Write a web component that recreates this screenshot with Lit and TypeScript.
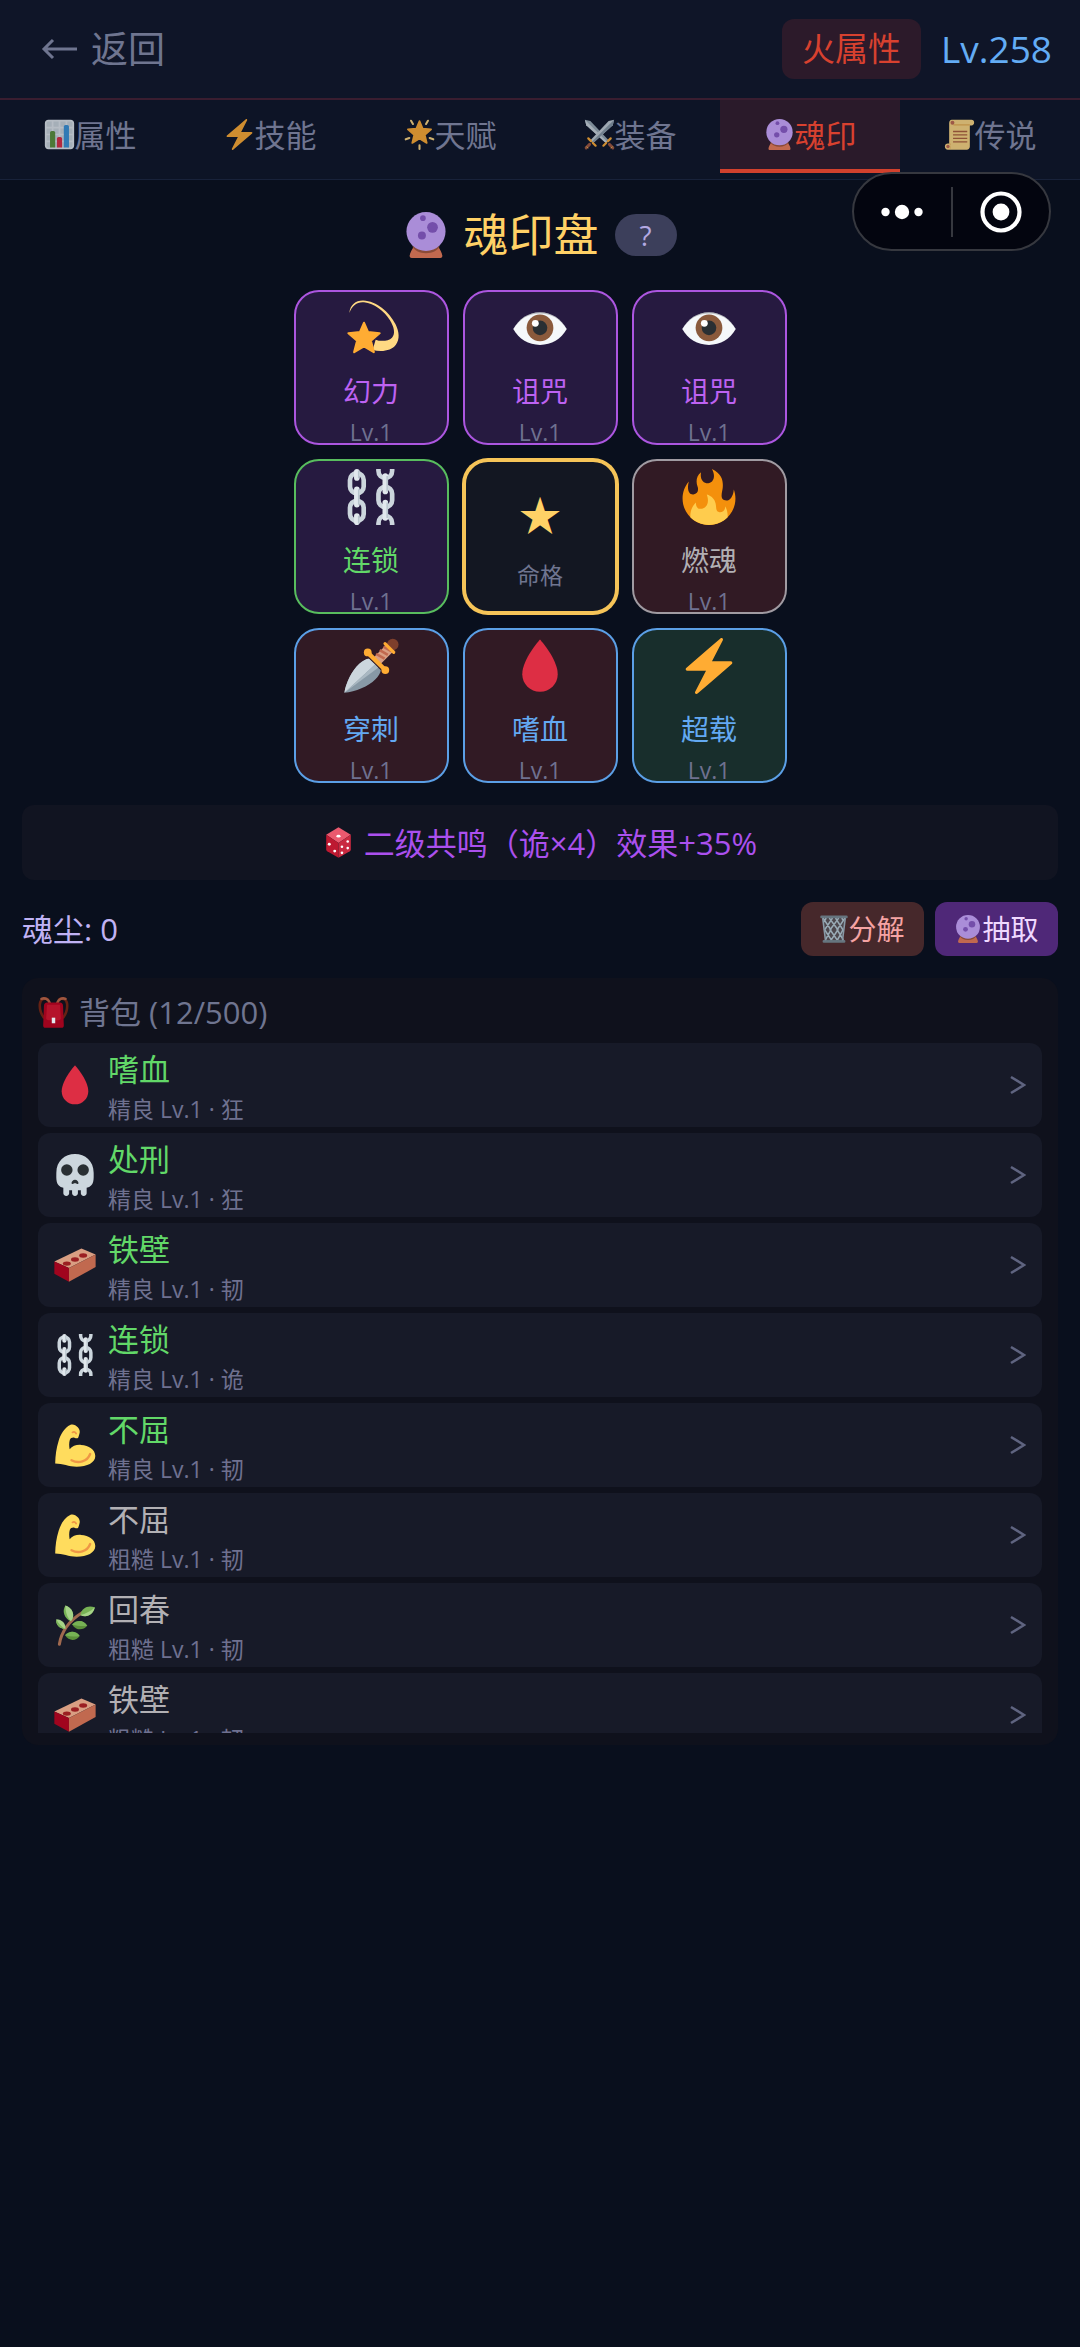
import { LitElement, html, svg, css, TemplateResult, SVGTemplateResult } from "lit";
import { customElement, property, state } from "lit/decorators.js";
import { classMap } from "lit/directives/class-map.js";

const chain = (x: number, offset: boolean) => svg`
  <g transform="translate(${x} 0)">
    ${offset
      ? svg`
        <path d="M-4.4 0v1.2c0 3 2 4.6 4.4 4.6s4.4-1.6 4.4-4.6V0M-4.4 36v-1.2c0-3 2-4.6 4.4-4.6s4.4 1.6 4.4 4.6V36" fill="none" stroke="#ccd6dd" stroke-width="3"/>
        <rect x="-4.4" y="11.5" width="8.8" height="13" rx="4.4" fill="none" stroke="#ccd6dd" stroke-width="3"/>
        <path d="M0 4.5v10M0 21.5v10" stroke="#e1e8ed" stroke-width="3.6" stroke-linecap="round"/>
        <path d="M1.2 4.5v10M1.2 21.5v10" stroke="#b8c5cd" stroke-width="1"/>`
      : svg`
        <rect x="-4.4" y="2.6" width="8.8" height="13" rx="4.4" fill="none" stroke="#ccd6dd" stroke-width="3"/>
        <rect x="-4.4" y="20.4" width="8.8" height="13" rx="4.4" fill="none" stroke="#ccd6dd" stroke-width="3"/>
        <path d="M0 1.8v4M0 13v10M0 30.2v4" stroke="#e1e8ed" stroke-width="3.6" stroke-linecap="round"/>
        <path d="M1.2 1v5M1.2 13v10M1.2 30v5" stroke="#b8c5cd" stroke-width="1"/>`}
  </g>`;

const icons: Record<string, SVGTemplateResult> = {
  chart: svg`
    <path fill="#ccd6dd" d="M31 2H5C3.343 2 2 3.343 2 5v26c0 1.657 1.343 3 3 3h26c1.657 0 3-1.343 3-3V5c0-1.657-1.343-3-3-3z"/>
    <path fill="#e1e8ed" d="M31 1H5C2.791 1 1 2.791 1 5v26c0 2.209 1.791 4 4 4h26c2.209 0 4-1.791 4-4V5c0-2.209-1.791-4-4-4zm0 2c1.103 0 2 .897 2 2v4h-6V3h4zm-4 16h6v6h-6v-6zm0-2v-6h6v6h-6zM25 3v6h-6V3h6zm-6 8h6v6h-6v-6zm0 8h6v6h-6v-6zM17 3v6h-6V3h6zm-6 8h6v6h-6v-6zm0 8h6v6h-6v-6zM3 5c0-1.103.897-2 2-2h4v6H3V5zm0 6h6v6H3v-6zm0 8h6v6H3v-6zm2 14c-1.103 0-2-.897-2-2v-4h6v6H5zm6 0v-6h6v6h-6zm8 0v-6h6v6h-6zm12 0h-4v-6h6v4c0 1.103-.897 2-2 2z"/>
    <path fill="#5c913b" d="M13 33H7V16c0-1.104.896-2 2-2h2c1.104 0 2 .896 2 2v17z"/>
    <path fill="#3b94d9" d="M29 33h-6V9c0-1.104.896-2 2-2h2c1.104 0 2 .896 2 2v24z"/>
    <path fill="#dd2e44" d="M21 33h-6V23c0-1.104.896-2 2-2h2c1.104 0 2 .896 2 2v10z"/>`,
  bolt: svg`
    <path fill="#ffac33" d="M32.938 15.651C32.792 15.26 32.418 15 32 15H19.925L26.89 1.458c.219-.426.106-.947-.271-1.243C26.437.071 26.218 0 26 0c-.233 0-.466.082-.653.243L18 6.588 3.347 19.243c-.316.273-.43.714-.284 1.105S3.582 21 4 21h12.075L9.11 34.542c-.219.426-.106.947.271 1.243.182.144.401.215.619.215.233 0 .466-.082.653-.243L18 29.412l14.653-12.655c.317-.273.43-.714.285-1.106z"/>`,
  glow: svg`
    <path fill="#ffac33" stroke="#ffac33" stroke-width="2" stroke-linejoin="round" d="M18 2.5l3.8 8.8 9.7.8-7.3 6.3 2.2 9.4-8.4-5-8.4 5 2.2-9.4-7.3-6.3 9.7-.8z"/>
    <path d="M8.2 2l2.2 3.8M27.8 2l-2.2 3.8M2 23.6l4.2-1.6M34 23.6L29.8 22M18 30.4v4.4" stroke="#ffd983" stroke-width="2.4" stroke-linecap="round"/>`,
  swords: svg`
    <path fill="#99aab5" d="M1 .8l6.4 1.5L28.8 25l-3.2 3.2L2.6 7.2z"/>
    <path fill="#ccd6dd" d="M1 .8l1.6 6.4 23 21 1.500-1.600z"/>
    <path fill="#c3ced6" d="M35 .8l-6.4 1.500L7.200 25l3.200 3.200 23-21z"/>
    <path fill="#8899a6" d="M35 .8l-1.600 6.400-23 21-1.500-1.600z"/>
    <path d="M29.500 29.500l4 4M6.500 29.500l-4 4" stroke="#a0573f" stroke-width="3.400" stroke-linecap="round"/>
    <path d="M31 22.500l-8.500 8.500M5 22.500l8.500 8.500" stroke="#ffac33" stroke-width="2.600" stroke-linecap="round" stroke-dasharray="4.500 3"/>
    <path d="M33.200 32l-2 2M2.800 32l2 2" stroke="#ffcc4d" stroke-width="1"/>`,
  orb: svg`
    <path fill="#c1694f" d="M8.600 26.500h18.800c1 2.600 3.400 5.400 3.400 8 0 .9-.7 1.500-1.600 1.500H6.800c-.9 0-1.600-.6-1.600-1.500 0-2.600 2.400-5.400 3.400-8z"/>
    <path fill="#8a4b38" d="M7.200 27h21.600c-2 3.400-6 5.200-10.800 5.200S9.200 30.400 7.200 27z"/>
    <circle cx="18" cy="15.300" r="15.300" fill="#aa8dd8"/>
    <circle cx="15.600" cy="4.800" r="2.200" fill="#744eaa"/>
    <circle cx="23.100" cy="12" r="4.200" fill="#744eaa"/>
    <circle cx="14.800" cy="18.400" r="3.100" fill="#744eaa"/>`,
  scroll: svg`
    <path fill="#dba65b" d="M7 2h22v29.500H7z"/>
    <path fill="#ffd983" d="M9 1h23c1.800 0 3 1.200 3 3.200S33.800 7.500 32 7.500h-2V32c0 2.200-1.500 3.600-3.500 3.600H4.500C2.400 35.600 1 34.200 1 32s1.400-3.500 3.500-3.500H6V5c0-2.200 1.200-4 3-4z"/>
    <path fill="#e39f3d" d="M30 7.500H11V6h19zM6 28.500h1.500V32c0 2-1 3.400-3 3.600C7 35.800 8 34 8 32z" opacity=".7"/>
    <circle cx="9.800" cy="4.300" r="2.300" fill="#c1694f"/>
    <circle cx="4.600" cy="32" r="2" fill="#c1694f"/>
    <path d="M10.500 14.500H27M10.500 18.500H27M10.500 22.500H27M10.500 26.500H27" stroke="#b0613c" stroke-width="1.600"/>`,
  dizzy: svg`
    <path fill="#ffd983" d="M4.100 8.300C4.600 3 8.200.2 13 .3c8.500.2 17 7.700 20.700 15.200 2.500 5 2.900 9.900.3 13.300-2.700 3.600-8.800 5-15 3.300l2-6.600c3.200 1.300 8.200 1 10.500-1.300 2.400-2.500 1.300-7-1.300-11.200C26.300 7 20.300 2.400 13.500 1.500 9.300 1 6 3.400 4.100 8.300z"/>
    <path fill="#ffac33" stroke="#ffac33" stroke-width="1.400" stroke-linejoin="round" d="M13.500 14.700l2.600 6 7.400.7-5.600 4.800 1.900 7.300-6.300-3.700-6.300 3.700 1.900-7.300-5.600-4.800 7.400-.7z"/>`,
  eye: svg`
    <path fill="#f5f8fa" d="M.8 18.700C4.400 12.200 10.600 7.900 18 7.900s13.600 4.300 17.200 10.800C31.600 25.200 25.400 28.900 18 28.900S4.400 25.200.8 18.700z"/>
    <path fill="#292f33" opacity=".3" d="M.8 18.700C4.400 12.200 10.600 7.900 18 7.900s13.600 4.300 17.200 10.800C31 12 25 8.700 18 8.700S5 12 .8 18.700z"/>
    <circle cx="18" cy="17.900" r="8.600" fill="#8a5a3c"/>
    <circle cx="18" cy="17.900" r="4.700" fill="#292f33"/>
    <circle cx="15" cy="15" r="2.200" fill="#fff"/>`,
  chains: svg`${chain(8.9, false)}${chain(27.2, true)}`,
  fire: svg`
    <path fill="#f4900c" d="M35 19c0-2.062-.367-4.039-1.040-5.868-.460 5.389-3.333 8.157-6.335 6.868-2.812-1.208-.917-5.917-.777-8.164.236-3.809-.012-8.169-6.931-11.794 2.875 5.500.333 8.917-2.333 9.125-2.958.231-5.667-2.542-4.667-7.042-3.238 2.386-3.332 6.402-2.333 9 1.042 2.708-.042 4.958-2.583 5.208-2.840.280-4.418-3.041-2.963-8.333C2.520 10.965 1 14.805 1 19c0 9.389 7.611 17 17 17s17-7.611 17-17z"/>
    <path fill="#ffcc4d" d="M28.394 23.999c.148 3.084-2.561 4.293-4.019 3.709-2.106-.843-1.541-2.291-2.083-5.291s-2.625-5.083-5.708-6c2.250 6.333-1.247 8.667-3.080 9.084-1.872.426-3.753-.001-3.968-4.007C7.352 23.668 6 26.676 6 30c0 .368.023.730.055 1.090C9.125 34.124 13.342 36 18 36s8.875-1.876 11.945-4.910c.032-.360.055-.722.055-1.090 0-2.187-.584-4.236-1.606-6.001z"/>`,
  dagger: svg`
    <path fill="#8899a6" d="M.9 35.200c1-6.400 4.800-14.400 9.600-18.600 2.200-2 4.400-3.300 6.200-3.300l7.600 7.400c-.2 1.800-1.600 4-3.600 6C16.500 31 8 34.600.9 35.200z"/>
    <path fill="#ccd6dd" d="M.9 35.200c1-6.400 4.800-14.400 9.600-18.600 2.200-2 4.400-3.300 6.200-3.300l3.900 3.800z"/>
    <path fill="#aab8c2" d="M.9 35.200L20.600 17.100l2 2z"/>
    <path d="M22 14.500l9-9" stroke="#d99e82" stroke-width="6.200"/>
    <path d="M21.300 10.200l5.400 3M23.600 7.800l5.200 3M26 5.500l5 3" stroke="#c1694f" stroke-width="1.700"/>
    <circle cx="32" cy="4.200" r="3.700" fill="#7e3f2c"/>
    <path d="M27 3.600l5.600 5.600" stroke="#ffac33" stroke-width="2" stroke-linecap="round"/>
    <path d="M15.900 9.400L27 20.400" stroke="#ffac33" stroke-width="2.800"/>
    <circle cx="15.900" cy="9.300" r="2.500" fill="#ffac33"/>
    <circle cx="27.200" cy="20.600" r="2.500" fill="#ffac33"/>`,
  drop: svg`
    <path fill="#dd2e44" d="M18 1C18 1 6.600 13.600 6.600 23.300c0 6.300 5.100 11.300 11.400 11.300s11.400-5 11.400-11.300C29.400 13.600 18 1 18 1z"/>`,
  die: svg`
    <path fill="#ea596e" d="M18 .3l14.300 8.800L18 18.600 3.700 9.100z"/>
    <path fill="#be1931" d="M3.700 9.100L18 18.600v17.200L4.900 28.100c-.8-.5-1.200-1.200-1.200-2z"/>
    <path fill="#c92a40" d="M32.300 9.100L18 18.600v17.200l13.100-7.700c.8-.5 1.200-1.200 1.200-2z"/>
    <ellipse cx="18" cy="10.600" rx="2.400" ry="1.700" fill="#fff"/>
    <g fill="#fff"><circle cx="7.300" cy="20" r="1.700"/><circle cx="13.600" cy="28" r="1.700"/>
    <circle cx="22" cy="23" r="1.500"/><circle cx="28.700" cy="16.800" r="1.500"/><circle cx="22" cy="30" r="1.500"/><circle cx="28.700" cy="24.500" r="1.500"/></g>`,
  bin: svg`
    <path d="M2 2.500h32M5 34h26" stroke="#66757f" stroke-width="3.400" stroke-linecap="round"/>
    <path fill="#546069" d="M3.500 4h29L29 32.500H7z" opacity=".55"/>
    <path d="M4 4l10 15L7 32M12 4l11 15-8.500 13M20 4l9.500 15-7 13M28 4l2.500 4M32 4L22 19l8 13M24 4L13 19l9 13M16 4L6 19l8.500 13M8 4L4.800 9" fill="none" stroke="#99aab5" stroke-width="2"/>
    <path d="M3.500 4L7 32.500M32.500 4L29 32.500" stroke="#8899a6" stroke-width="2"/>`,
  bag: svg`
    <path d="M12 3C8 .8 2.800 2 2.200 8c-.6 6 1.500 12 5 16.500M24 3C28 .8 33.200 2 33.800 8c.6 6-1.500 12-5 16.500" fill="none" stroke="#662113" stroke-width="3"/>
    <path d="M13.500 6.500C12 2.500 8 .6 4 2.200M22.500 6.500C24 2.500 28 .6 32 2.200" fill="none" stroke="#a0573f" stroke-width="3" stroke-linecap="round"/>
    <path fill="#a0041e" d="M10.500 6.500h15c2.200 0 3.600 1.600 3.600 4l.9 22.500c0 1.500-1 2.700-2.500 2.700h-19C7 35.700 6 34.500 6 33l.9-22.500c0-2.400 1.400-4 3.600-4z"/>
    <path fill="#b5132b" d="M10.500 9h15l1 15.500c0 1.500-1 2.500-2.500 2.500H12c-1.500 0-2.500-1-2.500-2.500z"/>
    <rect x="16" y="24" width="4" height="6.500" fill="#e1e8ed"/>`,
  skull: svg`
    <path fill="#ccd6dd" d="M34 16C34 6 26.800 0 18 0S2 6 2 16c0 5.400-.8 11.300 6 13v4.700c0 1.100 1 2.300 2.500 2.300S13 34.900 13 33.700V31h2.500v2.700c0 1.100 1 2.300 2.500 2.300s2.500-1.200 2.500-2.300V31H23v2.700c0 1.200 1 2.300 2.500 2.300s2.500-1.200 2.500-2.300V29c6.800-1.700 6-7.600 6-13z"/>
    <circle cx="11" cy="13.700" r="4.900" fill="#292f33"/>
    <circle cx="25" cy="13.700" r="4.900" fill="#292f33"/>
    <path fill="#292f33" d="M18 22c-1.800 0-3 1.600-3 3.100 0 .9 1.600.9 2.200 0h1.600c.6.900 2.200.9 2.200 0 0-1.500-1.200-3.100-3-3.100z"/>`,
  brick: svg`
    <path fill="#d99e82" d="M.3 15L23.500 3.800 35.700 9 12.800 20.600z"/>
    <path fill="#a0041e" d="M.3 15l12.500 5.600v11.800L.3 25.600z"/>
    <path fill="#c1694f" d="M12.800 20.600L35.700 9v10.800L12.800 32.400z"/>
    <g fill="#9b1f22"><ellipse cx="11" cy="16.800" rx="3.400" ry="1.900"/><ellipse cx="18" cy="13.300" rx="3.400" ry="1.900"/><ellipse cx="25" cy="9.800" rx="3.400" ry="1.900"/></g>`,
  arm: svg`
    <path fill="#ffdc5d" d="M14.200.7c2-.9 4.600.3 6.200 2 1.500 1.600 2 3.600 1.500 5.300-.3 1-.5 2.600-1.200 3.700-.8 1.100-2 .5-3.200 0-1.500-.4-3.300.3-3.900 1.800-.8 2.400-.7 5.500-.2 8.100 2.300-2.900 6-4 9.800-3.700 6.600.4 12.100 3.700 12.200 9.500 0 5.800-7 9.200-16 9.200C12.700 36.600 7.500 34 1 33.900 1.200 27 2 20.500 4 14.400 5.500 9.400 8.600 3.400 14.200.7z"/>
    <path d="M15 31c6 3.200 13.500 1.300 16-5.300" fill="none" stroke="#ef9645" stroke-width="2" stroke-linecap="round"/>
    <path d="M15.800 7.200c1.400-.8 2.600-.2 3.200 1" fill="none" stroke="#ef9645" stroke-width="1.500" stroke-linecap="round"/>`,
  herb: svg`
    <path d="M4.600 34.500C6.200 24.500 12 15 24 7.500" fill="none" stroke="#a0694f" stroke-width="2.600" stroke-linecap="round"/>
    <path fill="#77b255" d="M14.500 14.800C9 12.500 6.500 6 9.800 1.200c5.700 1.700 9 8.400 4.700 13.600z"/>
    <path fill="#a6d388" d="M14.500 14.800C11 11 9.600 6 9.800 1.200c5.700 1.700 9 8.400 4.700 13.600z"/>
    <path fill="#77b255" d="M22.500 9.500C24 3 29 .8 35 2.800c-1.400 6-6.500 9.600-12.500 6.700z"/>
    <path fill="#a6d388" d="M22.500 9.500C27 8.500 32 6 35 2.800c-1.400 6-6.500 9.600-12.500 6.700z"/>
    <path fill="#a6d388" d="M9.800 21.500C4.500 21 1.300 17.500 2 13c4.600.2 8.400 3.500 7.800 8.500z"/>
    <path fill="#77b255" d="M9.800 21.500C6.500 19.500 3.500 16.500 2 13c-.7 4.500 2.500 8 7.800 8.500z"/>
    <path fill="#5c913b" d="M15.500 17.500c4-4 10-4 13 1.200-3.600 4.200-9.500 4.300-13-1.200z"/>
    <path fill="#77b255" d="M15.500 17.500c4-4 10-4 13 1.200-4 .5-8.500.3-13-1.200z"/>
    <path fill="#5c913b" d="M9.500 26.800c3.600-4.200 9.300-4 12.500.6-3.300 4.600-9.300 4.600-12.500-.6z"/>
    <path fill="#77b255" d="M9.500 26.800c3.600-4.200 9.300-4 12.500.6-4 .8-8.500.6-12.500-.6z"/>`,
};

@customElement("soul-icon")
class SoulIcon extends LitElement {
  @property() name = "";

  static styles = css`
    :host { display: block; flex: none; width: 31px; height: 31px; }
    .glyph { display: block; width: 100%; height: 100%; overflow: visible; }
  `;

  render(): TemplateResult {
    return html`<svg class="glyph" viewBox="0 0 36 36" aria-hidden="true">${icons[this.name]}</svg>`;
  }
}

interface Slot { icon: string; name: string; tone: string; school: string; }
interface Item { icon: string; name: string; tone: string; grade: string; school: string; }

const tabs = [
  ["chart", "属性"], ["bolt", "技能"], ["glow", "天赋"],
  ["swords", "装备"], ["orb", "魂印"], ["scroll", "传说"],
];

const slots: (Slot | null)[] = [
  { icon: "dizzy", name: "幻力", tone: "epic", school: "trick" },
  { icon: "eye", name: "诅咒", tone: "epic", school: "trick" },
  { icon: "eye", name: "诅咒", tone: "epic", school: "trick" },
  { icon: "chains", name: "连锁", tone: "fine", school: "trick" },
  null,
  { icon: "fire", name: "燃魂", tone: "rough", school: "rage" },
  { icon: "dagger", name: "穿刺", tone: "rare", school: "rage" },
  { icon: "drop", name: "嗜血", tone: "rare", school: "rage" },
  { icon: "bolt", name: "超载", tone: "rare", school: "spirit" },
];

const items: Item[] = [
  { icon: "drop", name: "嗜血", tone: "fine", grade: "精良", school: "狂" },
  { icon: "skull", name: "处刑", tone: "fine", grade: "精良", school: "狂" },
  { icon: "brick", name: "铁壁", tone: "fine", grade: "精良", school: "韧" },
  { icon: "chains", name: "连锁", tone: "fine", grade: "精良", school: "诡" },
  { icon: "arm", name: "不屈", tone: "fine", grade: "精良", school: "韧" },
  { icon: "arm", name: "不屈", tone: "rough", grade: "粗糙", school: "韧" },
  { icon: "herb", name: "回春", tone: "rough", grade: "粗糙", school: "韧" },
  { icon: "brick", name: "铁壁", tone: "rough", grade: "粗糙", school: "韧" },
];

@customElement("app-root")
class AppRoot extends LitElement {
  @state() private active = 4;

  static styles = css`
    :host {
      display: block;
      position: relative;
      min-height: 100vh;
      background: #090f1d;
      color: #6f7590;
      font-family: "Open Sans", "Noto Sans CJK SC", sans-serif;
      font-size: 31px;
      line-height: 40px;
    }
    * { box-sizing: border-box; }
    button {
      appearance: none; margin: 0; padding: 0; border: 0; background: none;
      color: inherit; font: inherit; text-align: inherit; cursor: pointer;
    }
    h1, h2, p, ul { margin: 0; padding: 0; font-weight: 400; list-style: none; }

    .header {
      display: flex; align-items: center; justify-content: space-between;
      height: 100px; padding: 0 28px 0 40px;
      background: #0f1528; border-bottom: 2px solid #3a1d30;
    }
    .back { display: flex; align-items: center; gap: 13px; font-size: 37px; line-height: 48px; }
    .arrow { display: block; width: 38px; height: 24px; }
    .hero { display: flex; align-items: center; gap: 20px; }
    .element {
      padding: 8px 20px; border-radius: 12px;
      background: #2c1a2a; color: #d8412f; font-size: 33px; line-height: 44px;
    }
    .level { color: #63acf5; font-size: 37px; line-height: 48px; }

    .tabs {
      display: grid; grid-template-columns: repeat(6, 1fr);
      height: 80px; padding-bottom: 6px;
      background: #0d1426; border-bottom: 1px solid #18223a;
    }
    .tab {
      display: flex; align-items: center; justify-content: center;
      border-bottom: 4px solid transparent;
    }
    .tab soul-icon { opacity: 0.8; }
    .tab.on { background: #2a1a2a; border-bottom-color: #d2412d; color: #d8412f; }
    .tab.on soul-icon { opacity: 1; }

    .capsule {
      position: absolute; top: 172px; right: 29px;
      display: flex; align-items: center;
      width: 199px; height: 79px; border-radius: 40px;
      background: #03050f; border: 2px solid #36383f;
    }
    .capsule-btn { display: flex; flex: 1; align-items: center; justify-content: center; height: 100%; }
    .split { width: 2px; height: 50px; background: #36383f; }
    .dots { display: block; width: 44px; height: 16px; }
    .ring { display: block; width: 42px; height: 42px; }

    .main { display: flex; flex-direction: column; gap: 22px; padding: 22px 22px 0; }
    .title-row { display: flex; align-items: center; justify-content: center; gap: 16px; height: 66px; }
    .title { display: flex; align-items: center; gap: 14px; color: #ffd166; font-size: 45px; line-height: 66px; }
    .title soul-icon { width: 46px; height: 46px; }
    .help {
      width: 62px; height: 42px; border-radius: 21px; text-align: center;
      background: #3c3f5b; color: #b3a9e2; font-size: 28px; line-height: 42px;
    }

    .board { display: grid; grid-template-columns: repeat(3, 155px); gap: 14px; justify-content: center; }
    .cell {
      display: flex; flex-direction: column; align-items: center;
      height: 155px; padding-top: 8px;
      border: 2px solid; border-radius: 25px;
    }
    .cell soul-icon { width: 56px; height: 56px; }
    .cell-name { flex: none; margin-top: 17px; font-size: 28px; line-height: 36px; }
    .cell-level { flex: none; margin-top: 9px; color: #6f7190; font-size: 23px; line-height: 28px; }
    .trick { background: #261a40; }
    .rage { background: #311a24; }
    .spirit { background: #182e2c; }
    .epic { border-color: #ac56e0; color: #bd62f2; }
    .fine { border-color: #58bd5e; color: #62d868; }
    .rare { border-color: #5b9fe6; color: #63a9f2; }
    .rough { border-color: #a09ba2; color: #b2b0b4; }
    .core {
      justify-content: center; padding-top: 4px; background: #131722;
      border: 3px solid #f6c458; box-shadow: 0 0 0 1px #f6c458; color: #ffd166;
    }
    .core-star { font-size: 42px; line-height: 56px; }
    .core-name { margin-top: 16px; color: #6f7590; font-size: 23px; line-height: 32px; }

    .resonance {
      display: flex; align-items: center; justify-content: center; gap: 10px;
      height: 75px; border-radius: 12px; background: #111421; color: #ab50ee;
    }
    .dust-row { display: flex; align-items: center; justify-content: space-between; height: 54px; }
    .dust { color: #c0b2f4; }
    .actions { display: flex; gap: 11px; }
    .action {
      display: flex; align-items: center; justify-content: center;
      width: 123px; height: 54px; border-radius: 12px; font-size: 28px;
    }
    .action soul-icon { width: 28px; height: 28px; }
    .split-btn { background: #46282b; color: #f5a3a3; }
    .draw-btn { background: #4f2878; color: #f0d8ff; }

    .bag { padding: 12px 16px; border-radius: 16px; background: #0f111c; }
    .bag-title { display: flex; align-items: center; gap: 10px; margin-bottom: 9px; font-size: 31px; line-height: 44px; }
    .list { display: flex; flex-direction: column; gap: 6px; max-height: 690px; overflow: hidden; }
    .entry { flex: none; }
    .item {
      display: flex; align-items: center; gap: 12px;
      width: 100%; height: 84px; padding: 0 16px;
      border-radius: 12px; background: #171a28;
    }
    .item soul-icon { width: 42px; height: 42px; }
    .info { display: flex; flex: 1; flex-direction: column; padding-top: 4px; }
    .item-name { line-height: 44px; }
    .item-meta { color: #6f7190; font-size: 23px; line-height: 36px; }
    .chevron { display: block; width: 16px; height: 20px; }
  `;

  private slotCell(s: Slot | null) {
    if (!s) {
      return html`<button class="cell core">
        <span class="core-star">★</span><span class="core-name">命格</span>
      </button>`;
    }
    return html`<button class=${classMap({ cell: true, [s.tone]: true, [s.school]: true })}>
      <soul-icon name=${s.icon}></soul-icon>
      <span class="cell-name">${s.name}</span>
      <span class="cell-level">Lv.1</span>
    </button>`;
  }

  render() {
    return html`
      <header class="header">
        <button class="back">
          <svg class="arrow" viewBox="0 0 38 24" fill="none" stroke="currentColor" stroke-width="3" aria-hidden="true">
            <path d="M37 12H4M13 3L4 12l9 9"/>
          </svg>
          <span>返回</span>
        </button>
        <div class="hero"><span class="element">火属性</span><span class="level">Lv.258</span></div>
      </header>
      <nav class="tabs">
        ${tabs.map(([icon, label], i) => html`
          <button class=${classMap({ tab: true, on: i === this.active })} @click=${() => { this.active = i; }}>
            <soul-icon name=${icon}></soul-icon><span>${label}</span>
          </button>`)}
      </nav>
      <main class="main">
        <div class="title-row">
          <h1 class="title"><soul-icon name="orb"></soul-icon><span>魂印盘</span></h1>
          <button class="help">?</button>
        </div>
        <section class="board">${slots.map((s) => this.slotCell(s))}</section>
        <p class="resonance"><soul-icon name="die"></soul-icon><span>二级共鸣（诡×4）效果+35%</span></p>
        <div class="dust-row">
          <span class="dust">魂尘: 0</span>
          <div class="actions">
            <button class="action split-btn"><soul-icon name="bin"></soul-icon><span>分解</span></button>
            <button class="action draw-btn"><soul-icon name="orb"></soul-icon><span>抽取</span></button>
          </div>
        </div>
        <section class="bag">
          <h2 class="bag-title"><soul-icon name="bag"></soul-icon><span>背包 (12/500)</span></h2>
          <ul class="list">
            ${items.map((it) => html`
              <li class="entry"><button class="item">
                <soul-icon name=${it.icon}></soul-icon>
                <span class="info">
                  <span class=${classMap({ "item-name": true, [it.tone]: true })}>${it.name}</span>
                  <span class="item-meta">${it.grade} Lv.1 · ${it.school}</span>
                </span>
                <svg class="chevron" viewBox="0 0 16 20" fill="none" stroke="#5f6480" stroke-width="2.6" aria-hidden="true">
                  <path d="M1 2l13 8-13 8"/>
                </svg>
              </button></li>`)}
          </ul>
        </section>
      </main>
      <div class="capsule">
        <button class="capsule-btn" aria-label="更多">
          <svg class="dots" viewBox="0 0 44 16" fill="#fff" aria-hidden="true">
            <circle cx="5.5" cy="8" r="4.2"/><circle cx="22" cy="8" r="7.2"/><circle cx="38.5" cy="8" r="4.2"/>
          </svg>
        </button>
        <span class="split"></span>
        <button class="capsule-btn" aria-label="关闭">
          <svg class="ring" viewBox="0 0 42 42" aria-hidden="true">
            <circle cx="21" cy="21" r="18.5" fill="none" stroke="#fff" stroke-width="4.2"/>
            <circle cx="21" cy="21" r="8.4" fill="#fff"/>
          </svg>
        </button>
      </div>
    `;
  }
}
